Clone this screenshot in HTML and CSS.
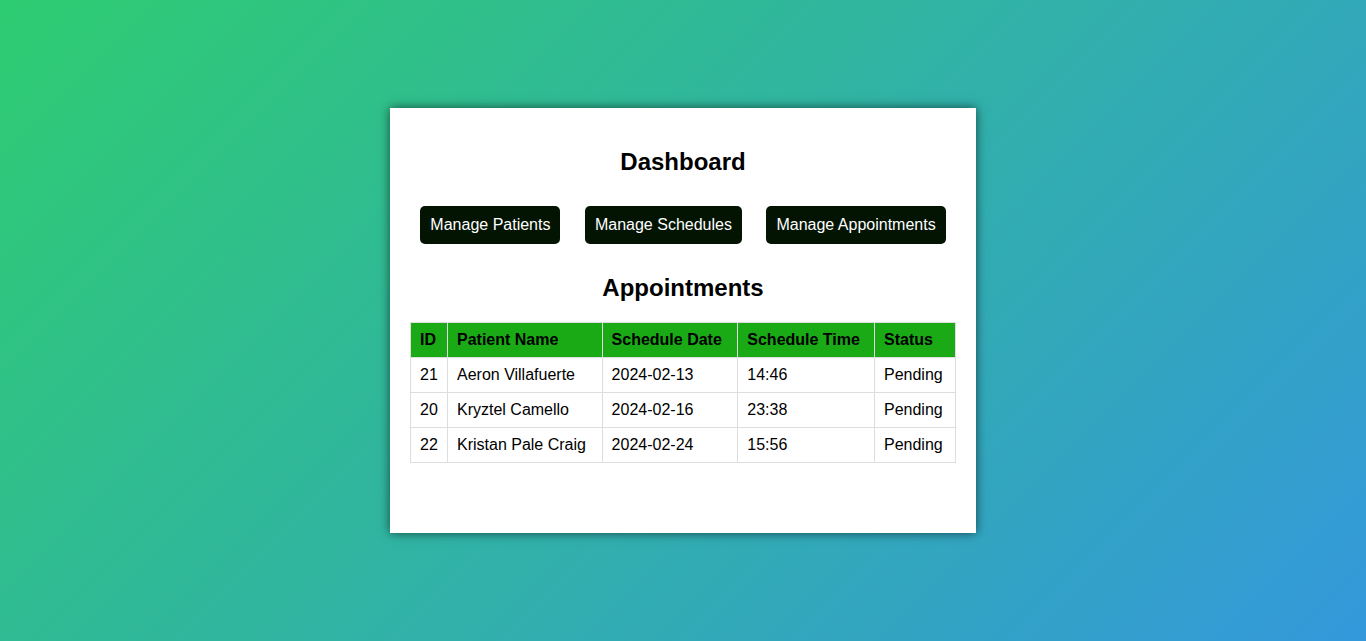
FILE: index.html
```html
<!DOCTYPE html>
<html lang="en">
<head>
<meta charset="UTF-8">
<title>Dashboard</title>
<link rel="stylesheet" href="styles.css">
</head>
<body>
<div class="card">
  <h2 class="title">Dashboard</h2>
  <div class="actions">
    <a class="btn" href="#">Manage Patients</a>
    <a class="btn" href="#">Manage Schedules</a>
    <a class="btn" href="#">Manage Appointments</a>
  </div>
  <h2 class="title">Appointments</h2>
  <table class="appts">
    <colgroup>
      <col class="c-id">
      <col class="c-name">
      <col class="c-date">
      <col class="c-time">
      <col class="c-status">
    </colgroup>
    <thead>
      <tr><th>ID</th><th>Patient Name</th><th>Schedule Date</th><th>Schedule Time</th><th>Status</th></tr>
    </thead>
    <tbody>
      <tr><td>21</td><td>Aeron Villafuerte</td><td>2024-02-13</td><td>14:46</td><td>Pending</td></tr>
      <tr><td>20</td><td>Kryztel Camello</td><td>2024-02-16</td><td>23:38</td><td>Pending</td></tr>
      <tr><td>22</td><td>Kristan Pale Craig</td><td>2024-02-24</td><td>15:56</td><td>Pending</td></tr>
    </tbody>
  </table>
</div>
</body>
</html>
```
FILE: styles.css
```css
html, body {
  margin: 0;
  padding: 0;
}
body {
  font-family: "Liberation Sans", Arial, sans-serif;
  background: linear-gradient(135deg, #2ecc71, #3498db);
  height: 100vh;
  display: flex;
  align-items: center;
  justify-content: center;
  color: #000;
}
.card {
  background: #fff;
  width: 586px;
  box-sizing: border-box;
  padding: 20px 20px 70px;
  box-shadow: 0 0 10px rgba(0, 0, 0, 0.6);
}
.title {
  text-align: center;
  font-size: 24px;
  margin: 20px 0;
  line-height: 28px;
}
.actions {
  display: flex;
  justify-content: center;
  gap: 24.5px;
  padding: 10px 0;
}
.btn {
  display: block;
  background: #031403;
  color: #fff;
  text-decoration: none;
  font-size: 16px;
  line-height: 18px;
  padding: 10px;
  border-radius: 5px;
}
.appts {
  width: 546px;
  border-collapse: collapse;
  font-size: 16px;
}
.appts th, .appts td {
  border: 1px solid #ddd;
  padding: 8px 9px;
  text-align: left;
  line-height: 18px;
}
.appts th {
  background: #19aa15;
  font-weight: bold;
}
.c-id { width: 37px; }
.c-name { width: 155px; }
.c-date { width: 136px; }
.c-time { width: 137px; }
.c-status { width: 81px; }
```
